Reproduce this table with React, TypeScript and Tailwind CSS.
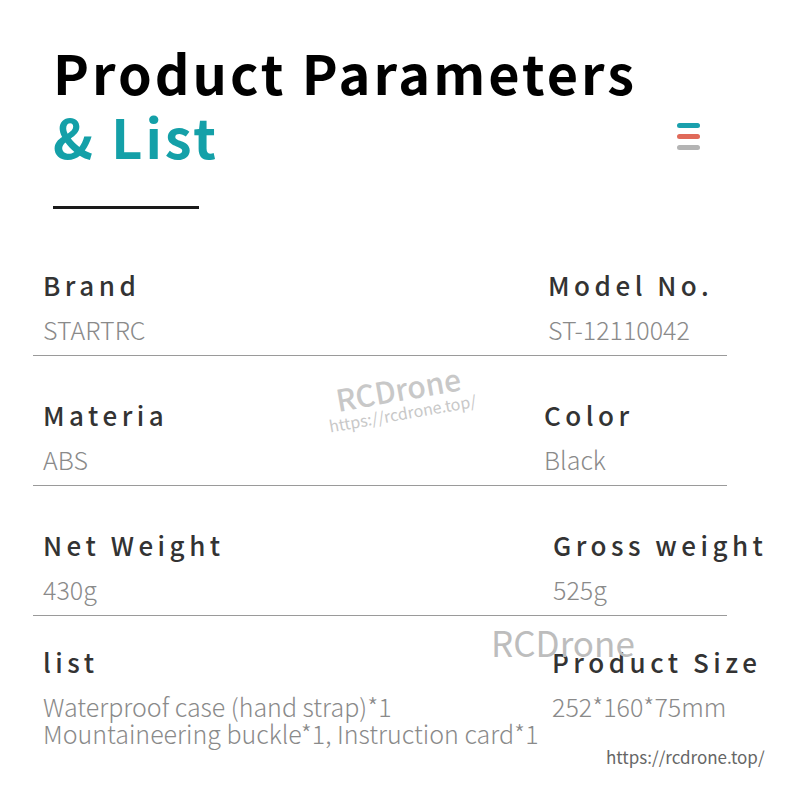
import React from 'react';

const font = { fontFamily: '"Noto Sans CJK SC", "Noto Sans", sans-serif' };

interface Param {
  label: string;
  value: string[];
}

const rows: { left: Param; right: Param; shift: string; pad: string }[] = [
  { left: { label: 'Brand', value: ['STARTRC'] }, right: { label: 'Model No.', value: ['ST-12110042'] }, shift: 'pl-[4px]', pad: 'pt-0' },
  { left: { label: 'Materia', value: ['ABS'] }, right: { label: 'Color', value: ['Black'] }, shift: 'pl-0', pad: 'pt-[44px]' },
  { left: { label: 'Net Weight', value: ['430g'] }, right: { label: 'Gross weight', value: ['525g'] }, shift: 'pl-[9px]', pad: 'pt-[44px]' },
  {
    left: { label: 'list', value: ['Waterproof case (hand strap)*1', 'Mountaineering buckle*1, Instruction card*1'] },
    right: { label: 'Product Size', value: ['252*160*75mm'] },
    shift: 'pl-[8px]',
    pad: 'pt-[31px]',
  },
];

function Cell({ item }: { item: Param }) {
  return (
    <div className="flex flex-col">
      <div className="whitespace-nowrap text-[26px] leading-[30px] font-medium tracking-[4.5px] text-[#333]">{item.label}</div>
      <div className="mt-[16px] text-[25px] leading-[27px] font-light text-[#8a8a8a]">
        {item.value.map((v) => (
          <div key={v} className="whitespace-nowrap">{v}</div>
        ))}
      </div>
    </div>
  );
}

export default function App() {
  return (
    <div className="relative w-[800px] h-[800px] bg-white overflow-hidden" style={font}>
      <div className="pt-[40px] pl-[53px] pr-[100px]">
        <h1 className="whitespace-nowrap text-[54px] leading-[64px] font-bold tracking-[3px] text-black">Product Parameters</h1>
        <div className="flex items-center justify-between">
          <h2 className="text-[54px] leading-[64px] font-bold tracking-[3px] text-[#14a0a8]">&amp; List</h2>
          <div className="flex flex-col gap-[6px]">
            <span className="block w-[23px] h-[5px] rounded-full bg-[#1aa0ad]" />
            <span className="block w-[23px] h-[5px] rounded-full bg-[#e06a5a]" />
            <span className="block w-[23px] h-[5px] rounded-full bg-[#b4b4b4]" />
          </div>
        </div>
        <div className="mt-[38px] w-[146px] h-[3px] bg-[#1a1a1a]" />
      </div>

      <div className="mt-[61px] ml-[33px] w-[694px]">
        {rows.map((r, i) => (
          <div
            key={r.left.label}
            className={
              'grid grid-cols-[501px_1fr] pl-[10px] pb-[12px] ' +
              r.pad +
              (i < rows.length - 1 ? ' border-b border-[#9a9a9a]' : '')
            }
          >
            <Cell item={r.left} />
            <div className={r.shift}>
              <Cell item={r.right} />
            </div>
          </div>
        ))}
      </div>

      {/* watermarks */}
      <div className="absolute left-[325px] top-[372px] -rotate-[10deg] flex flex-col items-center text-[#c8c8c8] select-none">
        <span className="text-[30px] leading-[32px] font-medium">RCDrone</span>
        <span className="text-[16px] leading-[18px]">https://rcdrone.top/</span>
      </div>
      <div className="absolute left-[491px] top-[622px] text-[35px] leading-[40px] text-[#bdbdbd]">RCDrone</div>
      <div className="absolute left-[606px] top-[745px] text-[17px] leading-[24px] text-[#666]">https://rcdrone.top/</div>
    </div>
  );
}
